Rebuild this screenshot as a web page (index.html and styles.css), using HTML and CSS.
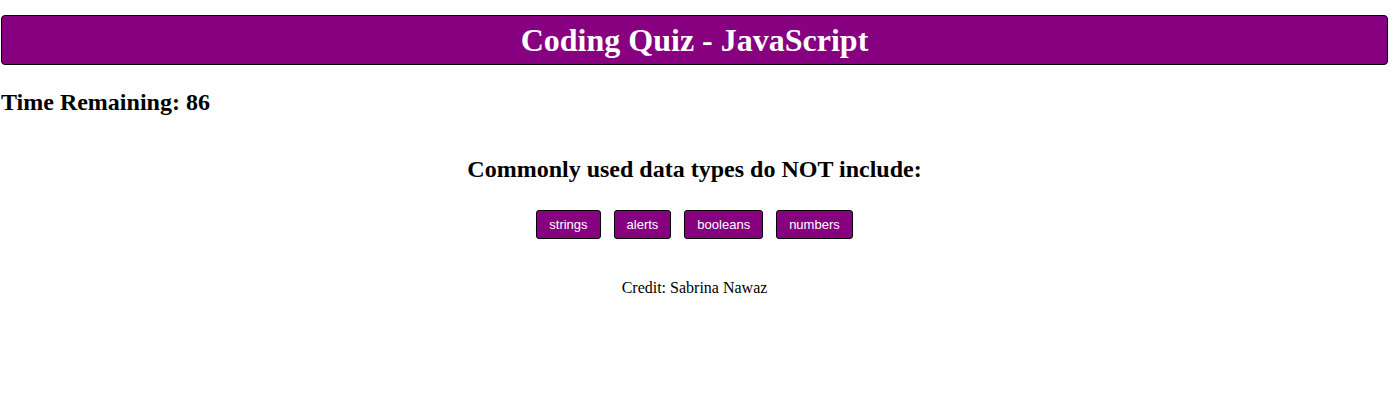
FILE: index.html
```html
<!DOCTYPE html>
<html lang="en">
<head>
<meta charset="utf-8">
<title>Coding Quiz - JavaScript</title>
<link rel="stylesheet" href="styles.css">
</head>
<body>
<header class="banner">
  <h1 class="banner-title">Coding Quiz - JavaScript</h1>
</header>
<h2 class="timer">Time Remaining: 86</h2>
<main class="quiz">
  <h2 class="question">Commonly used data types do NOT include:</h2>
  <div class="choices">
    <button class="choice">strings</button>
    <button class="choice">alerts</button>
    <button class="choice">booleans</button>
    <button class="choice">numbers</button>
  </div>
</main>
<footer class="credit">Credit: Sabrina Nawaz</footer>
</body>
</html>
```
FILE: styles.css
```css
html, body {
  margin: 0;
  background: #ffffff;
  font-family: "Liberation Serif", "Times New Roman", serif;
  color: #000;
}

body {
  padding: 0 5px 0 1px;
}

.banner {
  margin: 15px 0 0 0;
  background: #860080;
  border: 1px solid #000;
  border-radius: 4px;
}

.banner-title {
  margin: 0;
  font-size: 32px;
  line-height: 48px;
  font-weight: bold;
  color: #fff;
  text-align: center;
}

.timer {
  margin: 23px 0 0 0;
  font-size: 24px;
  line-height: 28px;
  font-weight: bold;
}

.quiz {
  display: flex;
  flex-direction: column;
  align-items: center;
}

.question {
  margin: 39px 0 0 0;
  font-size: 24px;
  line-height: 28px;
  font-weight: bold;
  text-align: center;
}

.choices {
  display: flex;
  gap: 13px;
  margin-top: 27px;
}

.choice {
  font-family: "Liberation Sans", Arial, Helvetica, sans-serif;
  font-size: 13px;
  line-height: 15px;
  color: #fff;
  background: #860080;
  border: 1px solid #000;
  border-radius: 3px;
  padding: 6px 12px;
  margin: 0;
}

.credit {
  margin-top: 40px;
  font-size: 16px;
  line-height: 18px;
  text-align: center;
}
```
